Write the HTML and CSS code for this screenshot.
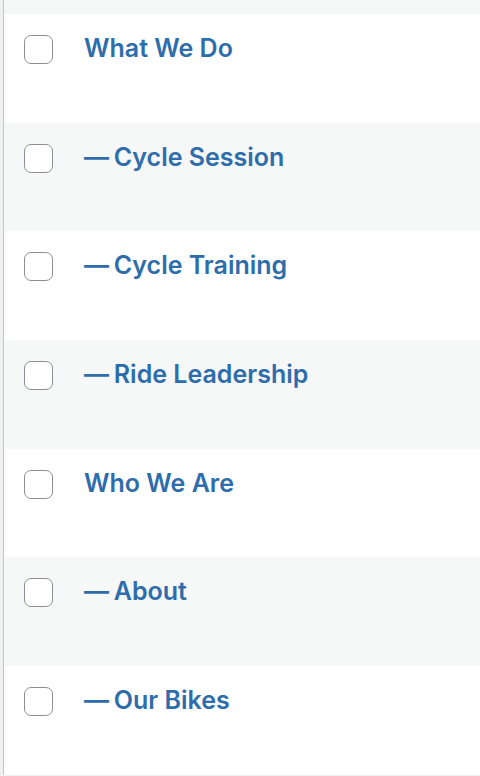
FILE: index.html
```html
<!DOCTYPE html>
<html>
<head>
<meta charset="utf-8">
<link rel="stylesheet" href="styles.css">
</head>
<body>
<div class="table">
  <div class="top-strip"></div>
  <div class="row"><span class="check"></span><a class="title" href="#">What We Do</a></div>
  <div class="row alt"><span class="check"></span><a class="title" href="#"><span class="dash">—</span> Cycle Session</a></div>
  <div class="row"><span class="check"></span><a class="title" href="#"><span class="dash">—</span> Cycle Training</a></div>
  <div class="row alt"><span class="check"></span><a class="title" href="#"><span class="dash">—</span> Ride Leadership</a></div>
  <div class="row"><span class="check"></span><a class="title" href="#">Who We Are</a></div>
  <div class="row alt"><span class="check"></span><a class="title" href="#"><span class="dash">—</span> About</a></div>
  <div class="row"><span class="check"></span><a class="title" href="#"><span class="dash">—</span> Our Bikes</a></div>
</div>
</body>
</html>
```
FILE: styles.css
```css
html, body {
  margin: 0;
  padding: 0;
  background: #f0f0f1;
  height: 100%;
}
body {
  font-family: Inter, Roboto, "Liberation Sans", sans-serif;
}
.table {
  margin-left: 3px;
  border-left: 1px solid #c3c4c7;
  background: #fff;
  height: 775px;
  overflow: hidden;
}
.top-strip {
  height: 14px;
  background: #f6f7f7;
}
.row {
  height: 108.7px;
  box-sizing: border-box;
  display: flex;
  align-items: flex-start;
  padding: 21px 0 0 20px;
  background: #fff;
}
.row.alt {
  background: #f6f7f7;
}
.check {
  flex: none;
  width: 29px;
  height: 29px;
  box-sizing: border-box;
  border: 1.5px solid #8c8f94;
  border-radius: 7px;
  background: #fff;
}
.title {
  margin-left: 31px;
  margin-top: -3px;
  font-size: 25px;
  line-height: 32px;
  font-weight: 600;
  color: #2e6dab;
  text-decoration: none;
}
.dash {
  letter-spacing: -1.5px;
}
```
